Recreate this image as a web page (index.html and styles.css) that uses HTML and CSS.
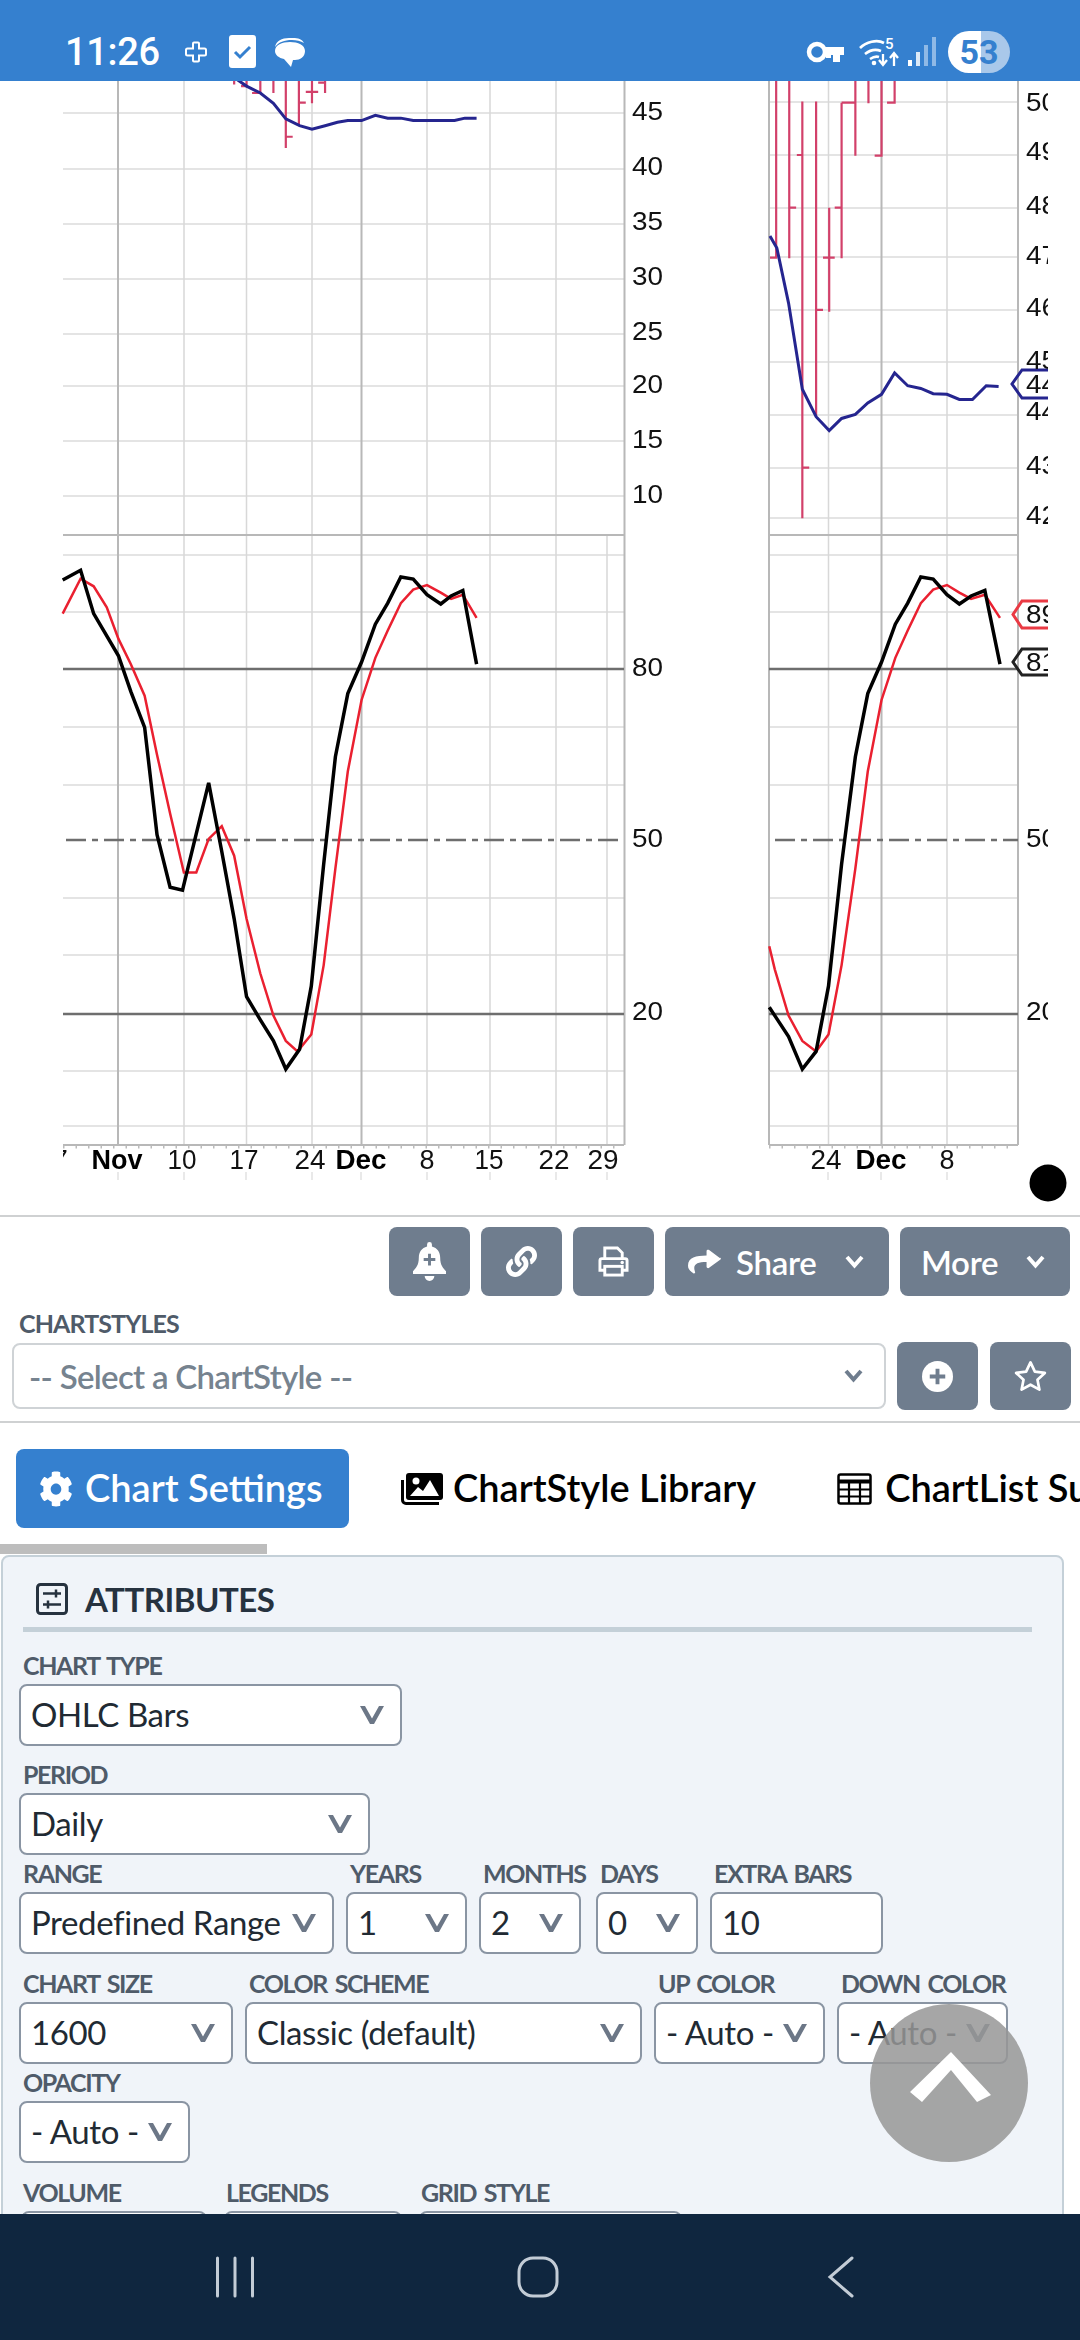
FILE: index.html
```html
<!DOCTYPE html>
<html lang="en">
<head>
<meta charset="utf-8">
<title>Chart Settings</title>
<link rel="stylesheet" href="styles.css">
</head>
<body>
<svg class="defs" width="0" height="0" aria-hidden="true">
  <symbol id="chev" viewBox="0 0 24 18"><path d="M0 0h5l7 12.500L19 0h5L14 18h-4z"/></symbol>
  <symbol id="chev-b" viewBox="0 0 19 14"><path d="M2 2l7.500 8.500L17 2" fill="none" stroke="currentColor" stroke-width="4"/></symbol>
</svg>
<div class="phone">
  <header class="status">
    <span class="time">11:26</span>
    <svg class="ic-plus" viewBox="0 0 24 22"><path d="M9 2.500a1 1 0 0 1 1-1h4a1 1 0 0 1 1 1V7.500h5.500a1.500 1.500 0 0 1 1.500 1.500v4a1.500 1.500 0 0 1-1.500 1.500H15v5a1 1 0 0 1-1 1h-4a1 1 0 0 1-1-1v-5H3.500A1.500 1.500 0 0 1 2 13V9a1.500 1.500 0 0 1 1.500-1.500H9z" fill="none" stroke="#fff" stroke-width="2"/></svg>
    <svg class="ic-check" viewBox="0 0 27 33"><rect width="27" height="33" rx="3" fill="#fff"/><path d="M6 17l5 5 10-10" fill="none" stroke="#3580cf" stroke-width="3"/></svg>
    <svg class="ic-chat" viewBox="0 0 31 30"><path d="M1 10c1-6 7-9 14-9h4c5 0 9 1 11 5-3-2-8-3-12-3C10 3 5 5 1 10z" fill="#fff"/><path d="M1 14C1 8 8 5 16 5s15 3 15 9-5 9-10 9h-2l-2 7-7-8C5 21 1 18 1 14z" fill="#fff"/></svg>
    <span class="status-gap"></span>
    <svg class="ic-key" viewBox="0 0 38 22"><circle cx="11" cy="11" r="8" fill="none" stroke="#fff" stroke-width="4.500"/><path d="M18 6h20v8h-4v7h-7v-7h-2v3h-5v-3h-2z" fill="#fff"/></svg>
    <svg class="ic-wifi" viewBox="0 0 40 31"><g fill="none" stroke="#fff" stroke-width="2.600"><path d="M1 12c6-6 17-9 24-5"/><path d="M6 18c5-4 11-5 16-3"/><path d="M11 23c3-2 6-3 9-2"/></g><circle cx="15" cy="27" r="2.300" fill="#fff"/><text x="26" y="13" class="wifi5">5</text><path d="M24 18v10m-4-4l4 5 4-5M35 30V18m-4 4l4-5 4 5" fill="none" stroke="#fff" stroke-width="2.300"/></svg>
    <svg class="ic-sig" viewBox="0 0 28 30"><rect x="0" y="23" width="4" height="6" fill="#fff"/><rect x="8" y="15" width="4" height="14" fill="#dbe9f7"/><rect x="16" y="8" width="4" height="21" fill="#8fb9e6"/><rect x="24" y="0" width="4" height="29" fill="#8fb9e6"/></svg>
    <div class="batt"><span class="batt-txt">53</span></div>
  </header>

  <main class="main">
    <svg class="chart" viewBox="0 81 1080 1133" width="1080" height="1133">
      <defs><clipPath id="rclip"><rect x="0" y="0" width="1048" height="1300"/></clipPath><clipPath id="lclip"><rect x="63" y="0" width="1017" height="1300"/></clipPath></defs>
      <path class="gl" d="M63 113H624M63 169H624M63 224H624M63 279H624M63 334H624M63 386H624M63 441H624M63 496H624M63 555H624M63 612H624M63 727H624M63 785H624M63 898H624M63 955H624M63 1071H624M63 1126H624"/>
      <path class="gl" d="M769 102H1018M769 155H1018M769 208H1018M769 257H1018M769 310H1018M769 362H1018M769 415H1018M769 468H1018M769 518H1018M769 555H1018M769 612H1018M769 727H1018M769 785H1018M769 898H1018M769 955H1018M769 1071H1018M769 1126H1018"/>
      <path class="gv" d="M184 81V1145M246.500 81V1145M312 81V1145M427 81V1145M490 81V1145M556 81V1145M607 535V1145M828.500 81V1145M947 81V1145"/>
      <path class="gd" d="M118 81V1145M361.500 81V1145M624.500 81V1145M769 81V1145M881.500 81V1145M1018 81V1145M63 535H624M769 535H1018M63 1145H624M769 1145H1018"/>
      <path class="tick" d="M63 1147H624M769 1147H1018"/>
      <path class="dk" d="M63 669H624M769 669H1018M63 1014H624M769 1014H1018"/>
      <path class="dash" d="M66 840H624M775 840H1018"/>
      <path class="below" d="M118 1172V1180M184 1172V1180M246 1172V1180M312 1172V1180M361 1172V1180M427 1172V1180M490 1172V1180M556 1172V1180M607 1172V1180M828 1172V1180M881 1172V1180M947 1172V1180"/>

      <g transform="scale(0.6887,0.3444)">
        <path class="bar" d="M340 235V245M358 235V250H350M378 235V270H366M397 235V270M415 235V430M415 397H425M434 235V360M434 298H444M453 235V300M444 267H462M472 235V270M472 240H462"/>
        <path class="bar" d="M1127 235V748H1118M1146 235V750M1146 603H1156M1165 295V1505M1157 450H1165M1165 1358H1175M1185 295V1210M1185 900H1195M1204 603V905M1195 748H1212M1222 298V750M1222 298H1242M1212 603H1222M1242 235V452M1261 235V300M1280 235V452H1270M1299 235V298H1288"/>
        <polyline class="blue" points="340,225 358,250 378,270 397,300 415,345 435,365 453,375 472,365 490,355 505,350 525,350 545,335 563,343 582,343 600,350 640,350 660,350 675,343 692,343"/>
        <polyline class="blue" points="1118,685 1128,720 1145,880 1165,1130 1185,1210 1204,1250 1222,1215 1242,1203 1260,1170 1280,1145 1299,1083 1318,1120 1337,1128 1355,1143 1375,1145 1393,1160 1412,1160 1432,1120 1450,1122"/>
      </g>
      <g transform="translate(0,540) scale(0.6887,0.4209)">
        <polyline class="red" points="91,175 117,92 136,110 155,160 172,235 190,295 210,370 228,510 247,650 267,790 285,790 303,710 322,680 340,750 358,900 378,1030 397,1130 415,1190 432,1215 452,1175 470,1010 487,780 505,550 525,380 545,280 563,215 582,150 600,118 620,107 640,125 655,140 672,130 692,185"/>
        <polyline class="blk" points="91,95 117,72 136,175 172,275 190,360 210,445 228,700 247,825 265,832 303,577 322,740 340,900 358,1085 378,1140 397,1190 415,1257 435,1210 452,1060 470,770 487,515 505,365 525,290 545,200 563,150 582,88 600,93 620,130 640,152 655,133 672,120 692,295"/>
        <polyline class="red" points="1117,965 1125,1020 1145,1130 1165,1190 1185,1215 1203,1175 1222,1010 1242,780 1260,550 1280,380 1300,280 1318,215 1337,150 1355,118 1375,107 1393,125 1410,140 1430,130 1452,185"/>
        <polyline class="blk" points="1117,1110 1125,1130 1145,1180 1165,1257 1185,1215 1203,1060 1222,770 1242,515 1260,365 1280,290 1300,200 1318,150 1337,88 1355,93 1375,130 1393,152 1410,133 1430,120 1452,295"/>
      </g>

      <g class="ax">
        <text x="632" y="120" textLength="31" lengthAdjust="spacingAndGlyphs">45</text>
        <text x="632" y="175" textLength="31" lengthAdjust="spacingAndGlyphs">40</text>
        <text x="632" y="230" textLength="31" lengthAdjust="spacingAndGlyphs">35</text>
        <text x="632" y="285" textLength="31" lengthAdjust="spacingAndGlyphs">30</text>
        <text x="632" y="340" textLength="31" lengthAdjust="spacingAndGlyphs">25</text>
        <text x="632" y="393" textLength="31" lengthAdjust="spacingAndGlyphs">20</text>
        <text x="632" y="448" textLength="31" lengthAdjust="spacingAndGlyphs">15</text>
        <text x="632" y="503" textLength="31" lengthAdjust="spacingAndGlyphs">10</text>
        <text x="632" y="676" textLength="31" lengthAdjust="spacingAndGlyphs">80</text>
        <text x="632" y="847" textLength="31" lengthAdjust="spacingAndGlyphs">50</text>
        <text x="632" y="1020" textLength="31" lengthAdjust="spacingAndGlyphs">20</text>
      </g>
      <g class="ax" clip-path="url(#rclip)">
        <path class="hex-b" d="M1070 370H1022L1012 384L1022 398H1070"/>
        <path class="hex-r" d="M1070 601H1022L1013 614.500L1022 628H1070"/>
        <path class="hex-k" d="M1070 649H1022L1013 662L1022 675H1070"/>
        <text x="1026" y="111" textLength="31" lengthAdjust="spacingAndGlyphs">50</text>
        <text x="1026" y="160" textLength="31" lengthAdjust="spacingAndGlyphs">49</text>
        <text x="1026" y="214" textLength="31" lengthAdjust="spacingAndGlyphs">48</text>
        <text x="1026" y="264" textLength="31" lengthAdjust="spacingAndGlyphs">47</text>
        <text x="1026" y="316" textLength="31" lengthAdjust="spacingAndGlyphs">46</text>
        <text x="1026" y="369" textLength="31" lengthAdjust="spacingAndGlyphs">45</text>
        <text x="1026" y="393" textLength="31" lengthAdjust="spacingAndGlyphs">44</text>
        <text x="1026" y="420" textLength="31" lengthAdjust="spacingAndGlyphs">44</text>
        <text x="1026" y="474" textLength="31" lengthAdjust="spacingAndGlyphs">43</text>
        <text x="1026" y="524" textLength="31" lengthAdjust="spacingAndGlyphs">42</text>
        <text x="1026" y="623" textLength="31" lengthAdjust="spacingAndGlyphs">89</text>
        <text x="1026" y="671" textLength="31" lengthAdjust="spacingAndGlyphs">81</text>
        <text x="1026" y="847" textLength="31" lengthAdjust="spacingAndGlyphs">50</text>
        <text x="1026" y="1020" textLength="31" lengthAdjust="spacingAndGlyphs">20</text>
      </g>
      <g class="ax mid" clip-path="url(#lclip)">
        <text x="60" y="1169">7</text>
        <text x="117" y="1169" class="bd" textLength="51" lengthAdjust="spacingAndGlyphs">Nov</text>
        <text x="182" y="1169" textLength="29" lengthAdjust="spacingAndGlyphs">10</text>
        <text x="244" y="1169" textLength="29" lengthAdjust="spacingAndGlyphs">17</text>
        <text x="310" y="1169" textLength="31" lengthAdjust="spacingAndGlyphs">24</text>
        <text x="361" y="1169" class="bd" textLength="51" lengthAdjust="spacingAndGlyphs">Dec</text>
        <text x="427" y="1169" textLength="15" lengthAdjust="spacingAndGlyphs">8</text>
        <text x="489" y="1169" textLength="29" lengthAdjust="spacingAndGlyphs">15</text>
        <text x="554" y="1169" textLength="31" lengthAdjust="spacingAndGlyphs">22</text>
        <text x="603" y="1169" textLength="31" lengthAdjust="spacingAndGlyphs">29</text>
        <text x="826" y="1169" textLength="31" lengthAdjust="spacingAndGlyphs">24</text>
        <text x="881" y="1169" class="bd" textLength="51" lengthAdjust="spacingAndGlyphs">Dec</text>
        <text x="947" y="1169" textLength="15" lengthAdjust="spacingAndGlyphs">8</text>
      </g>
      <circle cx="1048" cy="1183" r="18.500" fill="#000"/>
    </svg>

    <section class="toolbar">
      <button class="tb sq"><svg class="i-bell" viewBox="0 0 34 40"><path d="M17 0a2.500 2.500 0 0 1 2.500 2.500v2C25 6 28 10 28 16c0 8 3 11 6 14v3H0v-3c3-3 6-6 6-14 0-6 3-10 8.500-11.500v-2A2.500 2.500 0 0 1 17 0zM12 35h10a5 5 0 0 1-10 0z" fill="#fff"/><path d="M17 12v12M11 18h12" stroke="#6f7d8e" stroke-width="3"/></svg></button>
      <button class="tb sq"><svg class="i-link" viewBox="0 0 512 512"><path fill="#fff" d="M326.612 185.391c59.747 59.809 58.927 155.698.36 214.59-.11.12-.24.25-.36.37l-67.2 67.2c-59.27 59.27-155.699 59.262-214.96 0-59.27-59.26-59.27-155.7 0-214.96l37.106-37.106c9.84-9.84 26.786-3.3 27.294 10.606.648 17.722 3.826 35.527 9.69 52.721 1.986 5.822.567 12.262-3.783 16.612l-13.087 13.087c-28.026 28.026-28.905 73.66-1.155 101.96 28.024 28.579 74.086 28.749 102.325.51l67.2-67.19c28.191-28.191 28.073-73.757 0-101.83-3.701-3.694-7.429-6.564-10.341-8.569a16.037 16.037 0 0 1-6.947-12.606c-.396-10.567 3.348-21.456 11.698-29.806l21.054-21.055c5.521-5.521 14.182-6.199 20.584-1.731a152.482 152.482 0 0 1 20.522 17.197zM467.547 44.449c-59.261-59.262-155.69-59.27-214.96 0l-67.2 67.2c-.12.12-.25.25-.36.37-58.566 58.892-59.387 154.781.36 214.59a152.454 152.454 0 0 0 20.521 17.196c6.402 4.468 15.064 3.789 20.584-1.731l21.054-21.055c8.35-8.35 12.094-19.239 11.698-29.806a16.037 16.037 0 0 0-6.947-12.606c-2.912-2.005-6.64-4.875-10.341-8.569-28.073-28.073-28.191-73.639 0-101.83l67.2-67.19c28.239-28.239 74.3-28.069 102.325.51 27.75 28.3 26.872 73.934-1.155 101.96l-13.087 13.087c-4.35 4.35-5.769 10.79-3.783 16.612 5.864 17.194 9.042 34.999 9.69 52.721.509 13.906 17.454 20.446 27.294 10.606l37.106-37.106c59.271-59.259 59.271-155.699.001-214.959z"/></svg></button>
      <button class="tb sq"><svg class="i-print" viewBox="0 0 32 32"><g fill="none" stroke="#fff" stroke-width="3"><path d="M7 13V2h13l5 5v6"/><path d="M7 25H2V15a2 2 0 0 1 2-2h24a2 2 0 0 1 2 2v10h-5"/><rect x="7" y="21" width="18" height="9"/></g><circle cx="25" cy="17" r="1.800" fill="#fff"/></svg></button>
      <button class="tb wide-a"><svg class="i-share" viewBox="0 0 512 512" preserveAspectRatio="none"><path fill="#fff" d="M503.691 189.836L327.687 37.851C312.281 24.546 288 35.347 288 56.015v80.053C127.371 137.907 0 170.1 0 322.326c0 61.441 39.581 107.251 82.547 138.4 13.132 9.534 33.008-2.439 27.949-18.662C65.963 297.405 132.6 258.1 288 256.2V344c0 20.7 24.3 31.453 39.687 18.164l176.004-152c11.071-9.562 11.086-26.753 0-36.328z"/></svg><span class="tb-t">Share</span><svg class="tb-chev"><use href="#chev-b"/></svg></button>
      <button class="tb wide-b"><span class="tb-t">More</span><svg class="tb-chev"><use href="#chev-b"/></svg></button>
    </section>

    <section class="styles">
      <div class="lbl styles-lbl">CHARTSTYLES</div>
      <div class="styles-row">
        <div class="style-sel"><span>-- Select a ChartStyle --</span><svg class="style-chev"><use href="#chev-b"/></svg></div>
        <button class="tb sq tall"><svg class="i-pc" viewBox="0 0 32 32"><circle cx="16" cy="16" r="16" fill="#fff"/><path d="M16 8v16M8 16h16" stroke="#6f7d8e" stroke-width="4"/></svg></button>
        <button class="tb sq tall"><svg class="i-star" viewBox="0 0 34 33"><path d="M17 2.500l4.500 9.500 10.300 1.300-7.600 7.100 2 10.200L17 25.500 7.800 30.600l2-10.200L2.200 13.300 12.500 12z" fill="none" stroke="#fff" stroke-width="2.800" stroke-linejoin="round"/></svg></button>
      </div>
    </section>

    <nav class="tabs">
      <div class="tab active"><svg class="i-cog" viewBox="0 0 512 512" preserveAspectRatio="none"><path fill="#fff" d="M487.4 315.7l-42.6-24.6c4.3-23.2 4.3-47 0-70.2l42.6-24.6c4.9-2.8 7.1-8.6 5.5-14-11.1-35.6-30-67.8-54.7-94.6-3.8-4.1-10-5.1-14.8-2.3L380.8 110c-17.9-15.4-38.5-27.3-60.8-35.1V25.8c0-5.6-3.9-10.5-9.4-11.7-36.7-8.2-74.3-7.8-109.2 0-5.5 1.2-9.4 6.1-9.4 11.7V75c-22.2 7.9-42.8 19.8-60.8 35.1L88.7 85.500c-4.9-2.8-11-1.9-14.8 2.3-24.7 26.7-43.6 58.9-54.7 94.6-1.7 5.4.6 11.2 5.5 14L67.3 221c-4.3 23.2-4.3 47 0 70.2l-42.6 24.6c-4.9 2.8-7.1 8.6-5.5 14 11.1 35.6 30 67.8 54.7 94.6 3.8 4.1 10 5.1 14.8 2.3l42.6-24.6c17.9 15.4 38.5 27.3 60.8 35.1v49.2c0 5.6 3.9 10.5 9.4 11.7 36.7 8.2 74.3 7.8 109.2 0 5.5-1.2 9.4-6.1 9.4-11.7v-49.2c22.2-7.9 42.8-19.8 60.8-35.1l42.6 24.6c4.9 2.8 11 1.9 14.8-2.3 24.7-26.7 43.6-58.9 54.7-94.6 1.5-5.5-.7-11.3-5.6-14.1zM256 336c-44.1 0-80-35.9-80-80s35.9-80 80-80 80 35.9 80 80-35.9 80-80 80z"/></svg><span class="tab-t">Chart Settings</span></div>
      <div class="tab t2"><svg class="i-img" viewBox="0 0 42 32"><path d="M5 3a3 3 0 0 1 3-3h31a3 3 0 0 1 3 3v21a3 3 0 0 1-3 3H8a3 3 0 0 1-3-3z" fill="#000"/><path d="M9 23l8-9 5 4 7-11 9 16z" fill="#fff"/><circle cx="15" cy="8" r="3.500" fill="#fff"/><path d="M1.500 7v20a3.500 3.500 0 0 0 3.500 3.500h33" fill="none" stroke="#000" stroke-width="3"/></svg><span class="tab-t">ChartStyle Library</span></div>
      <div class="tab t3"><svg class="i-tbl" viewBox="0 0 35 32"><rect x="1.500" y="1.500" width="32" height="29" rx="2" fill="#fff" stroke="#000" stroke-width="2.500"/><path d="M1.500 8.500h32" stroke="#000" stroke-width="4"/><path d="M1 16.500h33M1 23.500h33M12 8v23M23 8v23" stroke="#000" stroke-width="2.200"/></svg><span class="tab-t">ChartList Summary</span></div>
    </nav>
    <div class="tabbar"></div>

    <section class="panel">
      <h2 class="panel-h"><svg class="i-sl" viewBox="0 0 32 32"><rect x="1.500" y="1.500" width="29" height="29" rx="3" fill="none" stroke="#26323f" stroke-width="3"/><path d="M7 10.500h18M7 21.500h18M20 6.500v8M12 17.500v8" fill="none" stroke="#26323f" stroke-width="2.500"/></svg><span>ATTRIBUTES</span></h2>
      <div class="rule"></div>

      <div class="row sp"><div class="f w383"><label class="lbl">CHART TYPE</label><div class="sel"><span>OHLC Bars</span><svg class="chev"><use href="#chev"/></svg></div></div></div>
      <div class="row"><div class="f w351"><label class="lbl">PERIOD</label><div class="sel"><span>Daily</span><svg class="chev"><use href="#chev"/></svg></div></div></div>
      <div class="row sp">
        <div class="f w315"><label class="lbl">RANGE</label><div class="sel"><span>Predefined Range</span><svg class="chev"><use href="#chev"/></svg></div></div>
        <div class="f w120"><label class="lbl">YEARS</label><div class="sel"><span>1</span><svg class="chev"><use href="#chev"/></svg></div></div>
        <div class="f w102"><label class="lbl">MONTHS</label><div class="sel"><span>2</span><svg class="chev"><use href="#chev"/></svg></div></div>
        <div class="f w102 gap3"><label class="lbl">DAYS</label><div class="sel"><span>0</span><svg class="chev"><use href="#chev"/></svg></div></div>
        <div class="f w173"><label class="lbl">EXTRA BARS</label><div class="sel"><span>10</span></div></div>
      </div>
      <div class="row">
        <div class="f w214"><label class="lbl">CHART SIZE</label><div class="sel"><span>1600</span><svg class="chev"><use href="#chev"/></svg></div></div>
        <div class="f w397"><label class="lbl">COLOR SCHEME</label><div class="sel"><span>Classic (default)</span><svg class="chev"><use href="#chev"/></svg></div></div>
        <div class="f w171"><label class="lbl">UP COLOR</label><div class="sel"><span>- Auto -</span><svg class="chev"><use href="#chev"/></svg></div></div>
        <div class="f w171"><label class="lbl">DOWN COLOR</label><div class="sel"><span>- Auto -</span><svg class="chev"><use href="#chev"/></svg></div></div>
      </div>
      <div class="row sp"><div class="f w171"><label class="lbl">OPACITY</label><div class="sel"><span>- Auto -</span><svg class="chev"><use href="#chev"/></svg></div></div></div>
      <div class="row row-last">
        <div class="f w186"><label class="lbl">VOLUME</label><div class="sel"></div></div>
        <div class="f w178"><label class="lbl">LEGENDS</label><div class="sel"></div></div>
        <div class="f w263"><label class="lbl">GRID STYLE</label><div class="sel"></div></div>
      </div>
    </section>
  </main>

  <footer class="navbar">
    <svg class="n-rec" viewBox="0 0 40 42"><path d="M2.500 2v38M20 2v38M37.500 2v38"/></svg>
    <svg class="n-home" viewBox="0 0 42 42"><rect x="2" y="2" width="38" height="38" rx="14"/></svg>
    <svg class="n-back" viewBox="0 0 28 42"><path d="M25 2L3 21l22 19"/></svg>
  </footer>

  <button class="up"><svg class="up-i" viewBox="0 0 82 50"><path d="M41 0l40 43-14 7-26-32-29 32L0 40z" fill="#fff"/></svg></button>
</div>
</body>
</html>
```

FILE: styles.css
```css
* { box-sizing: border-box; }
html, body { margin: 0; padding: 0; background: #fff; }
.defs { position: absolute; }
.phone {
  position: relative;
  width: 1080px;
  height: 2340px;
  display: flex;
  flex-direction: column;
  overflow: hidden;
  font-family: Lato, "Noto Sans", sans-serif;
}

/* status bar */
.status {
  flex: 0 0 81px;
  background: #3580cf;
  display: flex;
  align-items: center;
  padding: 22px 70px 0 65px;
  color: #fff;
}
.time { font: 500 38px Roboto, sans-serif; width: 119px; letter-spacing: -0.3px; }
.ic-plus { width: 24px; height: 22px; margin-right: 21px; }
.ic-check { width: 27px; height: 33px; margin-right: 18px; }
.ic-chat { width: 31px; height: 30px; }
.status-gap { flex: 1; }
.ic-key { width: 38px; height: 22px; margin-right: 15px; }
.ic-wifi { width: 40px; height: 31px; margin-right: 9px; }
.ic-sig { width: 28px; height: 30px; margin-right: 12px; }
.wifi5 { font: 500 15px Roboto, sans-serif; fill: #fff; }
.batt {
  width: 62px;
  height: 42px;
  border-radius: 21px;
  background: linear-gradient(90deg, #fff 0 33px, #a9c8ea 33px);
  display: flex;
  align-items: center;
  justify-content: center;
}
.batt-txt { font: 700 34px Roboto, sans-serif; color: #3580cf; }

/* main */
.main { flex: 1; min-height: 0; overflow: hidden; }
.chart { display: block; filter: blur(0.7px); }
.gl { stroke: #e4e4e4; stroke-width: 2; fill: none; }
.gv { stroke: #d8d8d8; stroke-width: 1.500; fill: none; }
.gd { stroke: #b8b8b8; stroke-width: 2; fill: none; }
.tick { stroke: #bbb; stroke-width: 3; stroke-dasharray: 1.500 11; fill: none; }
.below { stroke: #e2e2e2; stroke-width: 1.500; fill: none; }
.dk { stroke: #6e6e6e; stroke-width: 2.500; fill: none; }
.dash { stroke: #6e6e6e; stroke-width: 2.500; stroke-dasharray: 20 6 6 6; fill: none; }
.bar { stroke: #d2406a; stroke-width: 2.200; fill: none; vector-effect: non-scaling-stroke; }
.blue { stroke: #25258f; stroke-width: 3; fill: none; vector-effect: non-scaling-stroke; }
.red { stroke: #ea2030; stroke-width: 2.500; fill: none; vector-effect: non-scaling-stroke; }
.blk { stroke: #000; stroke-width: 3.500; fill: none; vector-effect: non-scaling-stroke; }
.ax text { font: 26px "Liberation Sans", sans-serif; fill: #111; }
.ax.mid text { text-anchor: middle; font-size: 28px; }
.ax text.bd { font-weight: 700; fill: #000; }
.hex-b { fill: none; stroke: #25258f; stroke-width: 3; }
.hex-r { fill: none; stroke: #ea3a44; stroke-width: 3; }
.hex-k { fill: none; stroke: #222; stroke-width: 3; }

/* toolbar */
.toolbar {
  margin-top: 1px;
  border-top: 2px solid #cfd1d2;
  display: flex;
  justify-content: flex-end;
  gap: 11px;
  padding: 10px 10px 0 0;
}
.tb {
  height: 69px;
  border: 0;
  border-radius: 8px;
  background: #6f7d8e;
  color: #fff;
  display: flex;
  align-items: center;
  padding: 0;
  font-family: inherit;
}
.sq { width: 81px; justify-content: center; flex: none; }
.tall { height: 68px; }
.wide-a { width: 224px; padding-left: 23px; }
.wide-b { width: 170px; padding-left: 21px; }
.i-bell { width: 33px; height: 39px; }
.i-link { width: 31px; height: 31px; }
.i-print { width: 31px; height: 31px; }
.i-share { width: 33px; height: 28px; }
.tb-t { font-size: 33px; font-weight: 600; margin-left: 15px; letter-spacing: -0.3px; }
.wide-b .tb-t { margin-left: 0; }
.tb-chev { width: 19px; height: 14px; margin-left: auto; margin-right: 25px; color: #fff; }

/* chartstyles */
.styles { padding: 0 10px 0 12px; border-bottom: 2px solid #cfd1d2; height: 127px; }
.lbl {
  display: block;
  font-size: 25px;
  font-weight: 700;
  line-height: 37px;
  color: #4f5b69;
  height: 37px;
  letter-spacing: -1.4px;
  word-spacing: 3px;
  white-space: nowrap;
  padding-left: 4px;
}
.styles-lbl { padding-left: 7px; height: 46px; line-height: 54px; letter-spacing: -0.9px; }
.styles-row { display: flex; gap: 12px; }
.style-sel {
  width: 874px;
  height: 66px;
  margin-top: 1px;
  margin-right: -1px;
  flex: none;
  border: 2px solid #cfd3d6;
  border-radius: 8px;
  display: flex;
  align-items: center;
  justify-content: space-between;
  padding: 0 21px 0 15px;
  font-size: 33px;
  font-weight: 600;
  letter-spacing: -0.7px;
  color: #76838f;
}
.style-chev { width: 19px; height: 14px; color: #6f7d8e; }
.i-pc { width: 31px; height: 31px; }
.i-star { width: 33px; height: 32px; }

/* tabs */
.tabs {
  display: flex;
  align-items: center;
  margin-top: 26px;
  padding-left: 16px;
  height: 79px;
  white-space: nowrap;
  font-size: 38px;
  font-weight: 600;
  color: #000;
  overflow: hidden;
}
.tab { display: flex; align-items: center; flex: none; }
.tab-t { padding-bottom: 3px; }
.tab.active {
  width: 333px;
  height: 79px;
  background: #3580cf;
  color: #fff;
  border-radius: 8px;
  padding-left: 23px;
  gap: 12px;
}
.t2 { margin-left: 52px; gap: 10px; }
.t3 { margin-left: 81px; gap: 13px; }
.i-cog { width: 34px; height: 36px; }
.i-img { width: 42px; height: 32px; }
.i-tbl { width: 35px; height: 32px; }
.tabbar { width: 267px; height: 10px; margin-top: 16px; background: #bdbdbd; }

/* attributes panel */
.panel {
  margin: 1px 16px 0 1px;
  height: 700px;
  background: #f0f4f9;
  border: 2px solid #c4d0d8;
  border-radius: 8px;
  padding: 0 0 0 16px;
}
.panel-h {
  margin: 0;
  display: flex;
  align-items: center;
  gap: 17px;
  height: 70px;
  padding: 14px 0 0 17px;
  font-size: 33px;
  font-weight: 700;
  letter-spacing: -0.5px;
  color: #26323f;
}
.i-sl { width: 32px; height: 32px; }
.rule { height: 5px; margin: 0 30px 0 4px; background: #c4d0d8; }
.row { display: flex; gap: 12px; }
.sp { margin-bottom: 11px; }
.rule + .row { margin-top: 15px; margin-bottom: 10px; }
.f { flex: none; }
.gap3 { margin-left: 3px; }
.row-last { margin-left: 2px; gap: 17px; }
.row-last .lbl { padding-left: 2px; }
.w383 { width: 383px; }
.w351 { width: 351px; }
.w315 { width: 315px; }
.w120 { width: 121px; }
.w102 { width: 102px; }
.w173 { width: 173px; }
.w214 { width: 214px; }
.w397 { width: 397px; }
.w171 { width: 171px; }
.w186 { width: 186px; }
.w178 { width: 178px; }
.w263 { width: 263px; }
.sel {
  height: 62px;
  border: 2px solid #8a95a3;
  border-radius: 8px;
  background: #fff;
  display: flex;
  align-items: center;
  justify-content: space-between;
  padding: 0 16px 3px 10px;
  font-size: 33px;
  letter-spacing: -0.4px;
  color: #212a33;
  white-space: nowrap;
}
.chev { width: 24px; height: 18px; fill: #6c7787; flex: none; margin-top: 3px; }

/* nav */
.navbar {
  flex: 0 0 126px;
  background: #0f263f;
  display: flex;
  align-items: center;
  justify-content: center;
  padding-right: 10px;
}
.navbar svg { fill: none; stroke: #c3ccd6; stroke-width: 3; stroke-linecap: round; }
.n-rec { width: 40px; height: 42px; margin-right: 262px; }
.n-home { width: 42px; height: 42px; margin-right: 268px; }
.n-back { width: 28px; height: 42px; }

/* scroll-to-top overlay */
.up {
  position: absolute;
  left: 870px;
  top: 2004px;
  width: 158px;
  height: 158px;
  border: 0;
  border-radius: 50%;
  background: rgba(150, 150, 150, 0.85);
  display: flex;
  align-items: flex-start;
  justify-content: center;
  padding: 48px 0 0 4px;
}
.up-i { width: 82px; height: 50px; }
```
